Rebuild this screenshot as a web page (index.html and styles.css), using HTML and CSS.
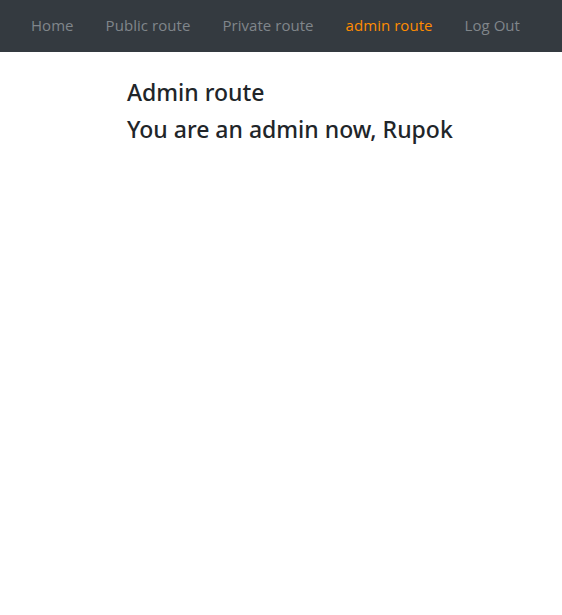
FILE: index.html
```html
<!DOCTYPE html>
<html>
<head>
<meta charset="utf-8">
<link rel="stylesheet" href="styles.css">
</head>
<body>
<nav class="navbar">
  <a class="nav-link" href="#">Home</a>
  <a class="nav-link" href="#">Public route</a>
  <a class="nav-link" href="#">Private route</a>
  <a class="nav-link active" href="#">admin route</a>
  <a class="nav-link" href="#">Log Out</a>
</nav>
<main class="content">
  <h4 class="title">Admin route</h4>
  <h4 class="title">You are an admin now, Rupok</h4>
</main>
</body>
</html>
```
FILE: styles.css
```css
html, body {
  margin: 0;
  padding: 0;
  background: #fff;
  font-family: "Open Sans", "Noto Sans", sans-serif;
  color: #212529;
}
.navbar {
  display: flex;
  align-items: center;
  height: 52px;
  padding: 0 15px 2px;
  box-sizing: border-box;
  background: #343a40;
}
.nav-link {
  padding: 0 16px;
  font-size: 15px;
  letter-spacing: 0.05px;
  color: #80868b;
  text-decoration: none;
  line-height: 24px;
}
.nav-link.active {
  color: #ff8c00;
}
.content {
  padding: 26px 0 0 127px;
}
.title {
  margin: 0 0 8px;
  font-family: "Noto Sans", "Open Sans", sans-serif;
  font-size: 23px;
  font-weight: 500;
  line-height: 1.26;
}
```
